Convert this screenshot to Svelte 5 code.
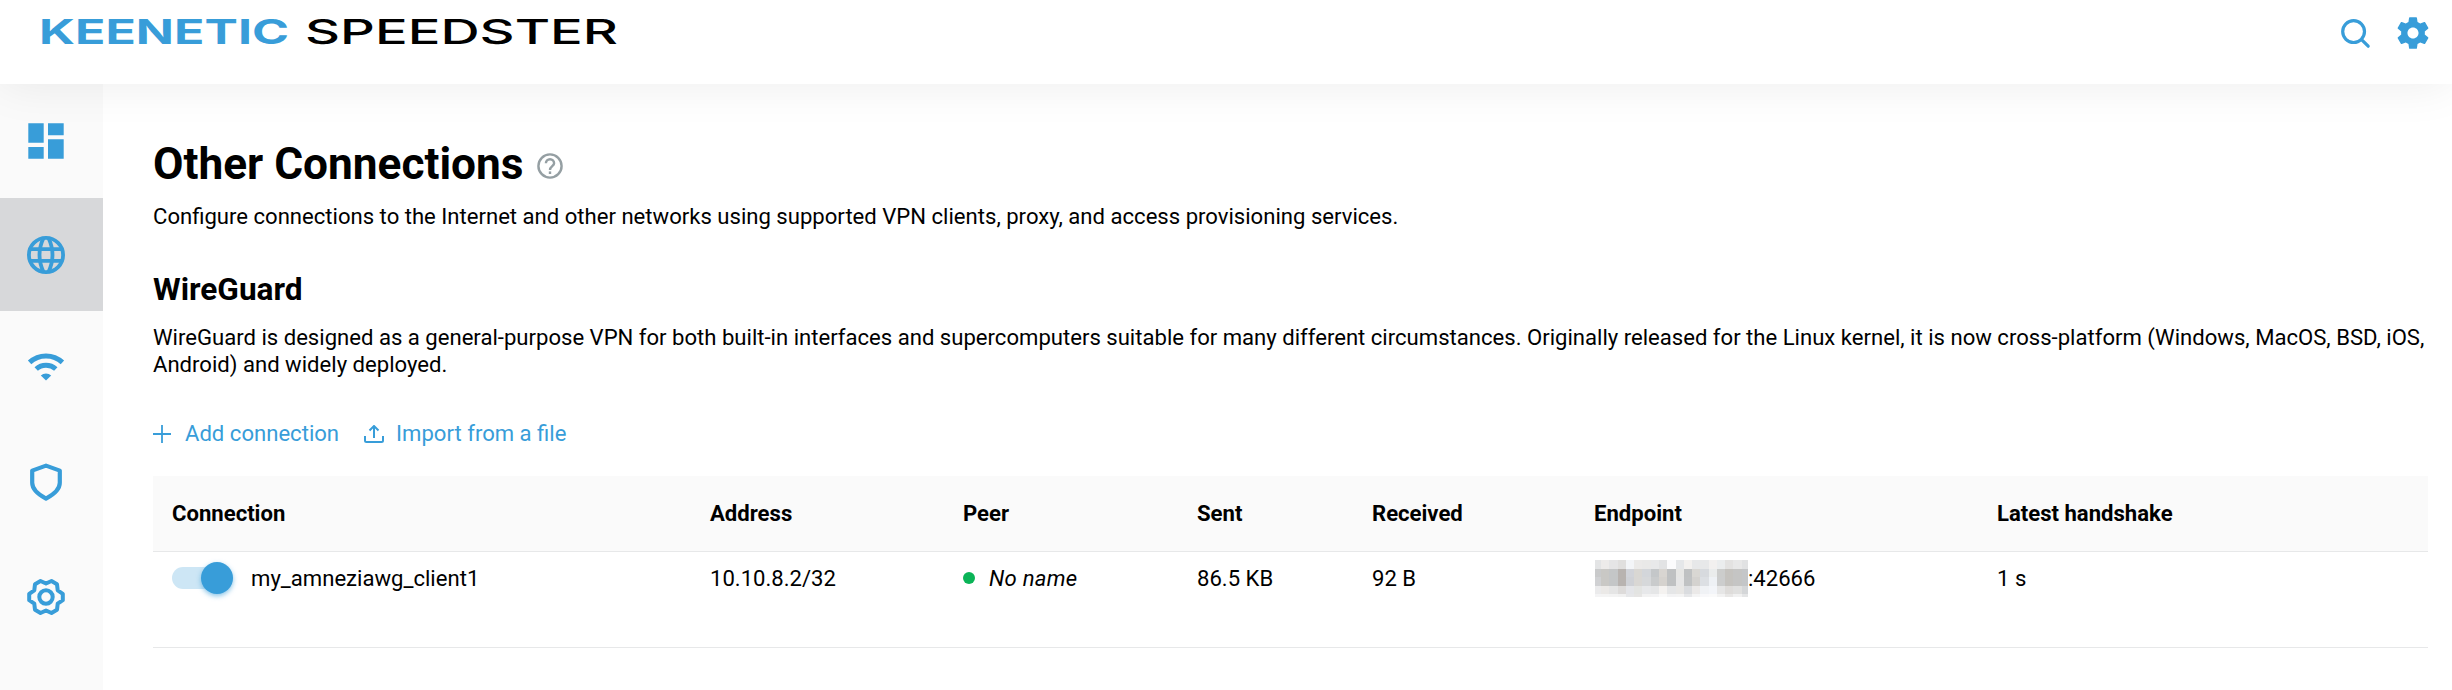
<script>
  const columns = ['Connection', 'Address', 'Peer', 'Sent', 'Received', 'Endpoint', 'Latest handshake'];
  // Redaction mosaic: cell edges and grey tones
  const xs = [0, 6, 14, 23, 31, 39, 47, 56, 64, 72, 81, 89, 97, 105, 114, 122, 130, 138, 147, 153];
  const ys = [0, 9, 17, 26, 34, 37];
  const tones = [
    'e3e4e5 edebea e5e5e6 e0dfde f3f5f8 ebeae9 e9e9e8 e8e9ea e2e3e4 fbfbfc e5e7e9 f3f1ef e7e8e9 e7e8e9 f2f0ef ebedee e3e2e1 e8e8e8 e1e2e3',
    'c9cacb c9c8c5 c4c6c7 b8b3b0 d1d3d9 d9d7d3 d3d6da c4c7c9 d8d5d1 bfc1c2 e6e6e4 bfc1c2 d9d7d3 d7dade eaecec cccdcc c5c3bf c5c5c4 c4c6c8',
    'd0d1d3 c9c8c5 c4c6c7 b8b3b0 cfd1d6 d9d7d4 d6d8da c9cbcc d5d2ce bfc1c2 e6e6e6 c0c2c3 d4d2cf dcdfe3 eef1f5 cccdcd c5c3bf c5c5c4 c4c6c8',
    'ebebec ebe9e7 e5e5e5 dddbda e4e5e9 e3e4e2 e7e8ea e5e6e7 f4f2f0 e5e6e7 e8e7e5 dadcdf ebe9e8 f0f2f5 f3f5f9 e6e6e6 dedcda e0e0df d4d6d8',
    'f4f4f5 f4f4f4 f3f3f3 f1f1f1 e6e7e9 e6e5e4 f2f2f2 f3f3f4 fafafa f3f3f4 f4f4f4 e6e7e9 f4f4f4 f8f8fa fafafa f2f2f2 e8e7e6 f1f1f1 e4e5e6'
  ].map((r) => r.split(' '));
</script>

<div class="page">
  <header>
    <svg class="logo" width="580" height="40" viewBox="0 0 580 40">
      <text x="0" y="32" textLength="250" lengthAdjust="spacingAndGlyphs" class="brand">KEENETIC</text>
      <text x="266" y="32" textLength="313" lengthAdjust="spacingAndGlyphs" class="model">SPEEDSTER</text>
    </svg>
    <div class="tools">
      <svg width="32" height="32" viewBox="0 0 32 32" fill="none" stroke="#389dd9" stroke-width="3.2" stroke-linecap="round"><circle cx="13.6" cy="13.6" r="10.9" /><path d="M21.8 21.8l6.4 6.4" /></svg>
      <svg width="38" height="38" viewBox="0 0 24 24" fill="#389dd9"><path d="M19.43 12.98c.04-.32.07-.64.07-.98s-.03-.66-.07-.98l2.11-1.65c.19-.15.24-.42.12-.64l-2-3.46c-.12-.22-.39-.3-.61-.22l-2.49 1c-.52-.4-1.08-.73-1.69-.98l-.38-2.65C14.46 2.18 14.25 2 14 2h-4c-.25 0-.46.18-.49.42l-.38 2.65c-.61.25-1.17.59-1.69.98l-2.49-1c-.23-.09-.49 0-.61.22l-2 3.46c-.13.22-.07.49.12.64l2.11 1.65c-.04.32-.07.65-.07.98s.03.66.07.98l-2.11 1.65c-.19.15-.24.42-.12.64l2 3.46c.12.22.39.3.61.22l2.49-1c.52.4 1.08.73 1.69.98l.38 2.65c.03.24.24.42.49.42h4c.25 0 .46-.18.49-.42l.38-2.65c.61-.25 1.17-.59 1.69-.98l2.49 1c.23.09.49 0 .61-.22l2-3.46c.12-.22.07-.49-.12-.64l-2.11-1.65zM12 15.5c-1.930 0-3.500-1.570-3.500-3.500s1.570-3.500 3.500-3.500 3.500 1.570 3.500 3.500-1.570 3.500-3.500 3.500z" /></svg>
    </div>
  </header>

  <div class="body">
    <nav>
      <a href="#dashboard" aria-label="Dashboard"><svg width="40" height="40" viewBox="0 0 40 40" fill="#389dd9"><path d="M2.3 2.3h15.4v19.4H2.3zM22 2.3h15.7v11.9H22zM2.3 26h15.4v11.7H2.3zM22 18.3h15.7v19.4H22z" /></svg></a>
      <a href="#internet" class="active" aria-label="Internet"><svg width="40" height="40" viewBox="0 0 40 40" fill="none" stroke="#389dd9" stroke-width="3.8"><circle cx="20" cy="20" r="17.1" /><path d="M17.500 3Q9.500 20 17.500 37M22.500 3Q30.500 20 22.500 37" /><path d="M4 14.2h32M4 25.8h32" /></svg></a>
      <a href="#wifi" aria-label="Wi-Fi"><svg width="40" height="40" viewBox="0 0 40 40" fill="none" stroke="#389dd9" stroke-width="5"><path d="M3.6 14.4a24 24 0 0 1 32.8 0M10.2 21a14.6 14.6 0 0 1 19.6 0" /><path d="M20 32.6l-5.2-5.2a7.8 7.8 0 0 1 10.4 0z" fill="#389dd9" stroke="none" /></svg></a>
      <a href="#security" aria-label="Security"><svg width="40" height="40" viewBox="0 0 40 40" fill="none" stroke="#389dd9" stroke-width="4.2" stroke-linejoin="round"><path d="M20 3.6l13.8 5v12.2c0 6-4.6 11-13.8 15.8C10.800 31.800 6.200 26.800 6.200 20.800V8.600z" /></svg></a>
      <a href="#management" aria-label="Management"><svg class="lower" width="40" height="40" viewBox="0 0 40 40" fill="none" stroke="#389dd9" stroke-width="4" stroke-linejoin="round"><circle cx="20" cy="20" r="6.7" /><path d="M14.500 4L20 6.500L25.500 4L31 7.200L31.700 13.300L36.800 16.800V23.200L31.700 26.700L31 32.800L25.500 36L20 33.500L14.500 36L9 32.800L8.300 26.700L3.200 23.200V16.800L8.300 13.300L9 7.200z" /></svg></a>
    </nav>

    <main>
      <div class="title">
        <h1>Other Connections</h1>
        <svg width="26" height="26" viewBox="0 0 26 26" fill="none" stroke="#959fa3" stroke-width="2.4"><circle cx="13" cy="13" r="11.600" /><path d="M8.900 10.300a4.100 4.100 0 0 1 8.200 0c0 2.800-4.100 3.100-4.100 6.700" /><path d="M13 18.400v2.600" /></svg>
      </div>
      <p class="lead">Configure connections to the Internet and other networks using supported VPN clients, proxy, and access provisioning services.</p>
      <h2>WireGuard</h2>
      <p class="about">WireGuard is designed as a general-purpose VPN for both built-in interfaces and supercomputers suitable for many different circumstances. Originally released for the Linux kernel, it is now cross-platform (Windows, MacOS, BSD, iOS, Android) and widely deployed.</p>

      <div class="actions">
        <button><svg width="18" height="18" viewBox="0 0 18 18" fill="none" stroke="#389dd9" stroke-width="1.800"><path d="M9 0v18M0 9h18" /></svg>Add connection</button>
        <button class="import"><svg width="20" height="18" viewBox="0 0 20 18" fill="none" stroke="#389dd9" stroke-width="2"><path d="M10 13V1.500M5.500 5.500L10 1l4.500 4.500M1 11v4.500q0 1.500 1.500 1.500h15q1.500 0 1.500-1.500V11" /></svg>Import from a file</button>
      </div>

      <div class="table">
        <div class="row head">
          {#each columns as c}<div>{c}</div>{/each}
        </div>
        <div class="row data">
          <div class="conn"><span class="switch"><span class="knob"></span></span>my_amneziawg_client1</div>
          <div>10.10.8.2/32</div>
          <div class="peer"><span class="dot"></span><i>No name</i></div>
          <div>86.5 KB</div>
          <div>92 B</div>
          <div class="endpoint">
            <svg width="153" height="37" viewBox="0 0 153 37" shape-rendering="crispEdges">
              {#each tones as row, r}{#each xs.slice(0, -1) as x, c}<rect {x} y={ys[r]} width={xs[c + 1] - x} height={ys[r + 1] - ys[r]} fill={'#' + row[c]} />{/each}{/each}
            </svg>:42666
          </div>
          <div>1 s</div>
        </div>
      </div>
    </main>
  </div>
</div>

<style>
  :global(body) { background: #fff; }
  .page { height: 690px; overflow: hidden; display: flex; flex-direction: column; font: 22.1px/27px Roboto, sans-serif; color: #000; }
  header { height: 84px; box-sizing: border-box; flex: none; display: flex; justify-content: space-between; padding: 12px 20px 0 39px; background: #fff; box-shadow: 0 0 48px rgba(0, 0, 0, 0.08); z-index: 1; }
  .brand { font: 700 34px Inter, sans-serif; fill: #389dd9; }
  .model { font: 500 34px Inter, sans-serif; fill: #000; }
  .tools { display: flex; gap: 22px; align-items: flex-start; padding-top: 2px; }
  .tools svg:first-child { margin-top: 4px; }
  .body { flex: 1; display: flex; min-height: 0; }
  nav { width: 103px; flex: none; background: #fafafa; }
  nav a { display: flex; align-items: center; height: 113.7px; padding-left: 26px; box-sizing: border-box; }
  nav svg { display: block; }
  nav .lower { margin-top: 2px; }
  nav .active { background: #d7d8da; }
  main { flex: 1; padding: 53px 24px 0 50px; }
  .title { display: flex; align-items: center; gap: 13px; height: 54px; }
  h1 { margin: 0; font-size: 44.2px; line-height: 54px; font-weight: 700; }
  .title svg { margin-top: 4px; }
  p { margin: 0; }
  .lead { margin-top: 12px; }
  h2 { margin: 41px 0 0; font-size: 31.6px; line-height: 38px; font-weight: 700; }
  .about { margin-top: 15px; }
  .actions { display: flex; gap: 25px; margin-top: 42px; }
  button { display: flex; align-items: center; gap: 14px; padding: 0; border: 0; background: none; font: inherit; color: #389dd9; }
  .import { gap: 12px; }
  .table { margin-top: 29px; }
  .row { display: grid; grid-template-columns: 538px 253px 234px 175px 222px 403px 1fr; padding-left: 19px; box-sizing: border-box; border-bottom: 1px solid #e7e8e9; }
  .head { height: 76px; background: #fafafa; font-weight: 700; align-items: center; }
  .data { height: 96px; padding-top: 7px; align-items: start; }
  .data > div { height: 38px; display: flex; align-items: center; }
  .peer i { letter-spacing: 0.25px; }
  .endpoint svg { margin-left: 1px; }
  .switch { width: 58px; height: 22px; border-radius: 11px; background: #cde6f5; display: flex; align-items: center; justify-content: flex-end; margin-right: 21px; }
  .knob { width: 32px; height: 32px; flex: none; border-radius: 50%; background: #389dd9; box-shadow: 0 2px 5px rgba(56, 157, 217, 0.6); margin-right: -3px; }
  .dot { width: 12px; height: 12px; border-radius: 50%; background: #0ab457; margin-right: 14px; }
</style>
